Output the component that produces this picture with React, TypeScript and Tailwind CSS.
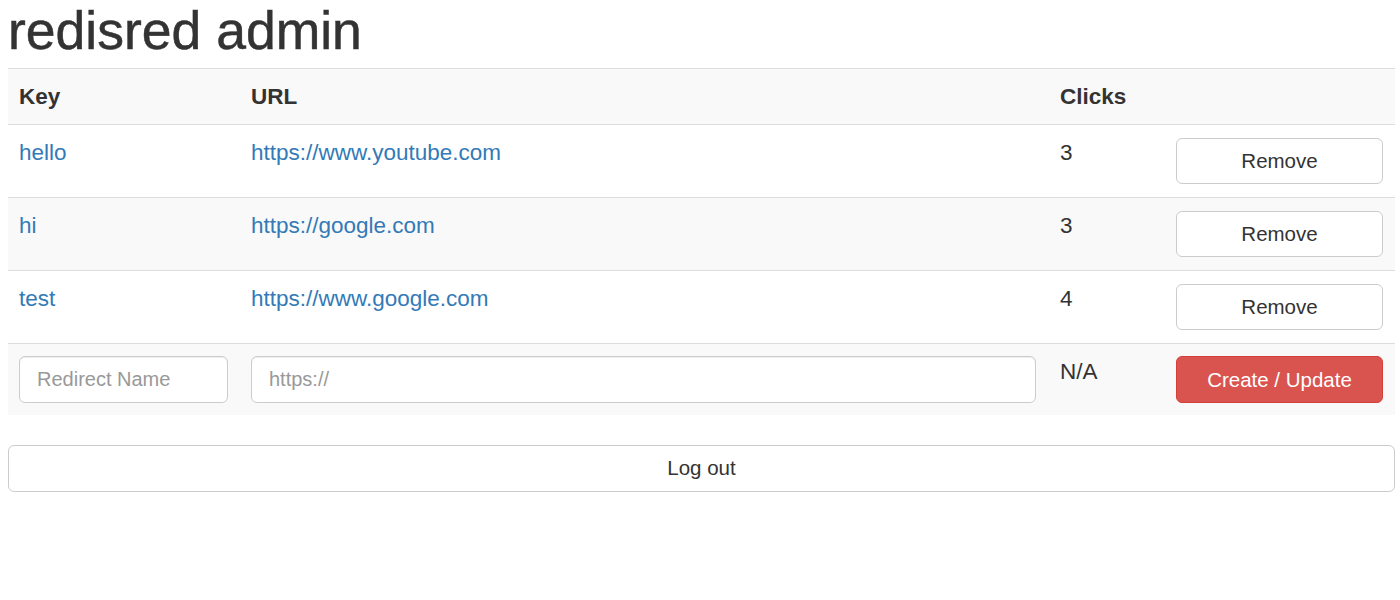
import React from "react";

interface Redirect {
  key: string;
  url: string;
  clicks: number;
}

const redirects: Redirect[] = [
  { key: "hello", url: "https://www.youtube.com", clicks: 3 },
  { key: "hi", url: "https://google.com", clicks: 3 },
  { key: "test", url: "https://www.google.com", clicks: 4 },
];

export default function App() {
  return (
    <div className="min-h-screen bg-white pl-2 text-[#333] font-['Liberation_Sans',Arial,sans-serif]">
      <h1 className="mt-[2px] mb-2 text-[53.5px] leading-[58px] font-normal [-webkit-text-stroke:0.5px_#333]">
        redisred admin
      </h1>

      <table className="w-[1387px] table-fixed border-collapse text-[22.5px] leading-[32px]">
        <colgroup>
          <col className="w-[231px]" />
          <col className="w-[809px]" />
          <col className="w-[116px]" />
          <col className="w-[231px]" />
        </colgroup>
        <thead>
          <tr className="bg-[#f9f9f9] border-t border-b border-[#ddd]">
            <th className="px-[11px] pt-3 pb-[11px] text-left font-bold">Key</th>
            <th className="px-3 pt-3 pb-[11px] text-left font-bold">URL</th>
            <th className="px-3 pt-3 pb-[11px] text-left font-bold">Clicks</th>
            <th className="px-3 pt-3 pb-[11px]"></th>
          </tr>
        </thead>
        <tbody>
          {redirects.map((r, i) => (
            <tr key={r.key} className={(i % 2 === 1 ? "bg-[#f9f9f9] " : "bg-white ") + "border-b border-[#ddd]"}>
              <td className="px-[11px] pt-3 pb-[14px] align-top">
                <a href="#" className="text-[#337ab7]">{r.key}</a>
              </td>
              <td className="px-3 pt-3 pb-[14px] align-top">
                <a href="#" className="text-[#337ab7]">{r.url}</a>
              </td>
              <td className="px-3 pt-3 pb-[14px] align-top">{r.clicks}</td>
              <td className="px-3 pt-[13px] pb-[13px] align-top">
                <button
                  type="button"
                  className="w-full h-[46px] rounded-[6px] border border-[#ccc] bg-white text-[20.5px] text-[#333]"
                >
                  Remove
                </button>
              </td>
            </tr>
          ))}
          <tr className="bg-[#f9f9f9]">
            <td className="px-[11px] py-3 align-top">
              <input
                type="text"
                placeholder="Redirect Name"
                className="w-full h-[47px] rounded-[6px] border border-[#ccc] bg-white px-[17px] text-[20px] shadow-[inset_0_1px_1px_rgba(0,0,0,0.075)] placeholder:text-[#999] outline-none"
              />
            </td>
            <td className="px-3 py-3 align-top">
              <input
                type="text"
                placeholder="https://"
                className="w-full h-[47px] rounded-[6px] border border-[#ccc] bg-white px-[17px] text-[20px] shadow-[inset_0_1px_1px_rgba(0,0,0,0.075)] placeholder:text-[#999] outline-none"
              />
            </td>
            <td className="px-3 py-3 align-top">N/A</td>
            <td className="px-3 py-3 align-top">
              <button
                type="button"
                className="w-full h-[47px] rounded-[6px] border border-[#d43f3a] bg-[#d9534f] text-[20.5px] text-white"
              >
                Create / Update
              </button>
            </td>
          </tr>
        </tbody>
      </table>

      <button
        type="button"
        className="mt-[30px] w-[1387px] h-[47px] rounded-[6px] border border-[#ccc] bg-white text-[20.5px] text-[#333]"
      >
        Log out
      </button>
    </div>
  );
}
